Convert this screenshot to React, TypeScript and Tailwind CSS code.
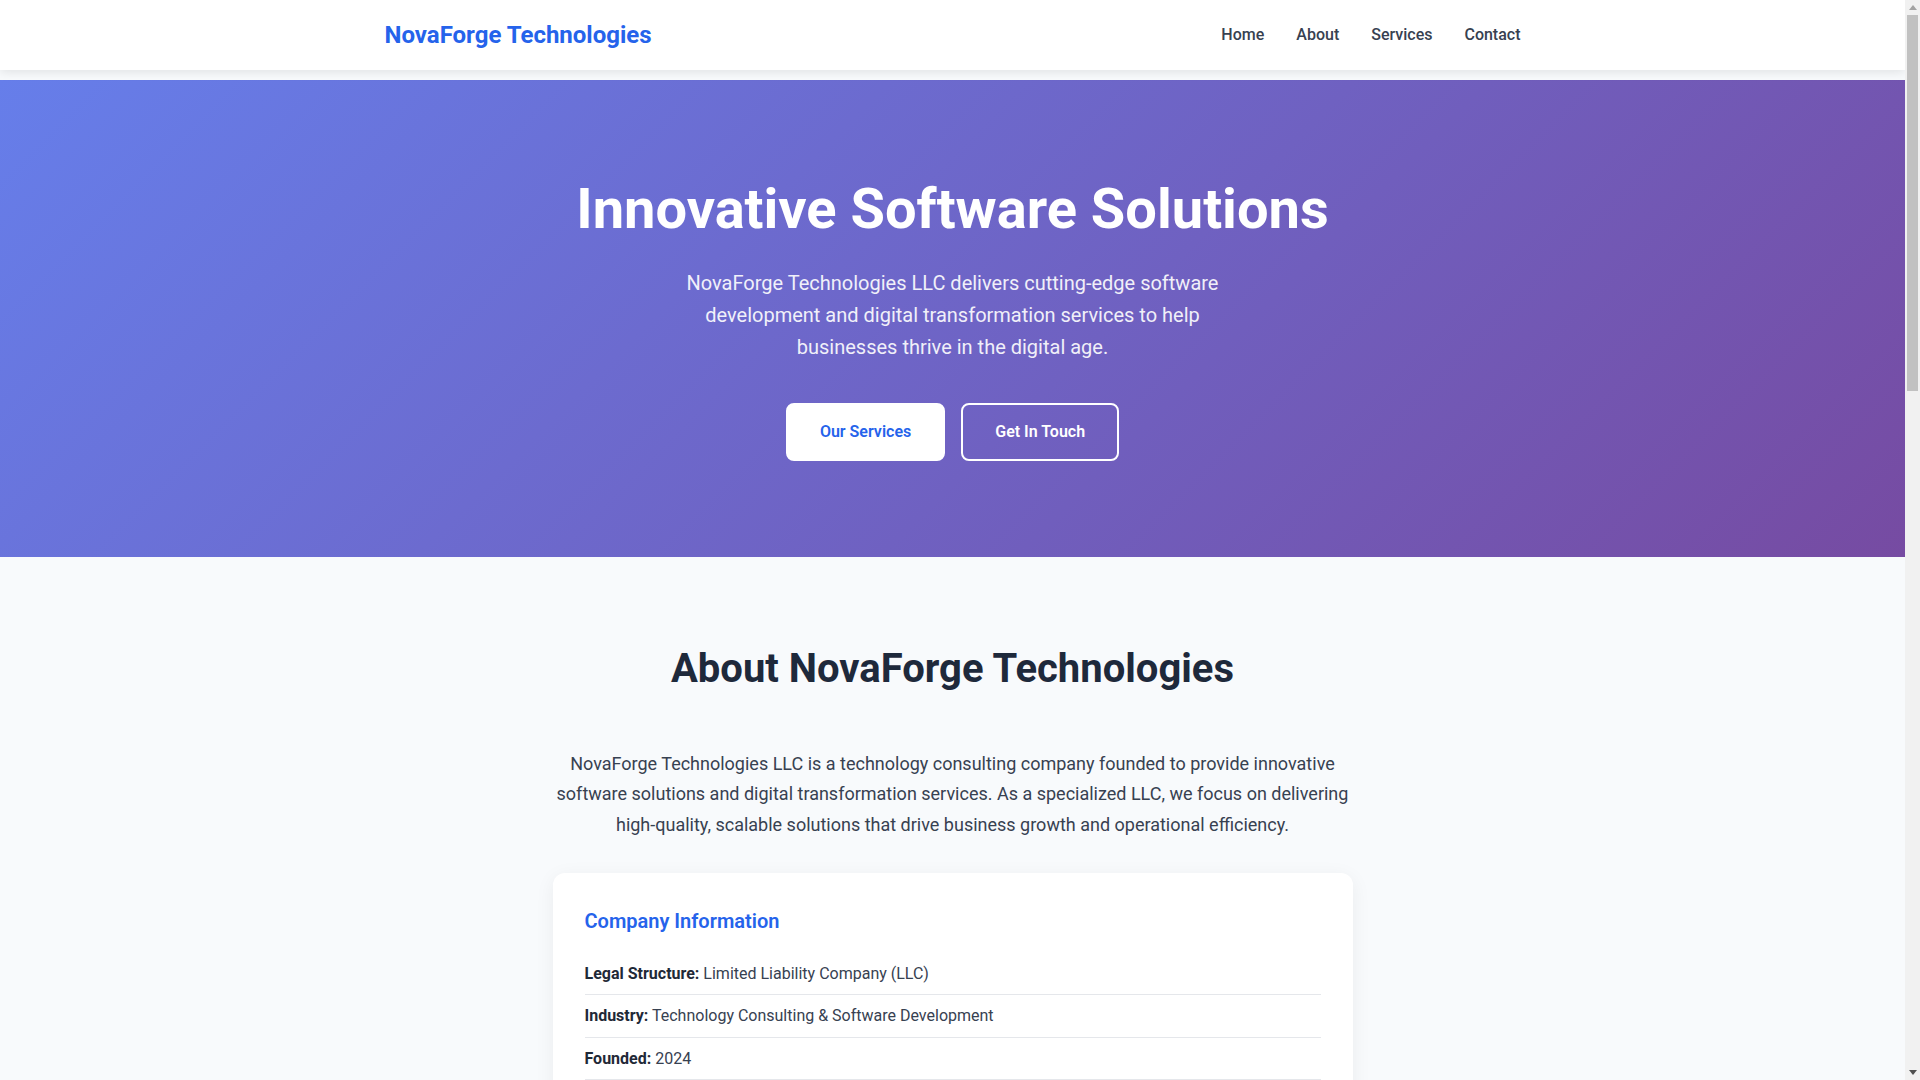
import React from "react";

const rows: [string, string][] = [
  ["Legal Structure:", "Limited Liability Company (LLC)"],
  ["Industry:", "Technology Consulting & Software Development"],
  ["Founded:", "2024"],
  ["Headquarters:", "United States"],
  ["Focus Areas:", "Custom Software, Cloud Solutions, Digital Transformation"],
];

const services = [
  {
    title: "Custom Software Development",
    text: "Tailored software solutions designed to meet your unique business requirements, built with modern technologies and best practices.",
  },
  {
    title: "Cloud Solutions",
    text: "Scalable cloud architecture, migration services and infrastructure management to keep your business agile and secure.",
  },
  {
    title: "Digital Transformation",
    text: "Strategic consulting to modernize your processes, systems and customer experiences for the digital era.",
  },
  {
    title: "Web & Mobile Applications",
    text: "Responsive web platforms and native mobile applications that deliver seamless experiences across devices.",
  },
  {
    title: "Data & Analytics",
    text: "Turn your data into actionable insights with modern analytics platforms, dashboards and reporting tools.",
  },
  {
    title: "Technology Consulting",
    text: "Expert guidance on technology strategy, architecture decisions and vendor selection for sustainable growth.",
  },
];

function Scrollbar() {
  return (
    <div className="fixed right-0 top-0 z-50 flex h-screen w-[15px] flex-col bg-[#f1f1f1]">
      <div className="flex h-[15px] items-center justify-center">
        <svg width="8" height="5" viewBox="0 0 8 5">
          <polygon points="4,0 8,5 0,5" fill="#a3a3a3" />
        </svg>
      </div>
      <div className="px-[2px]">
        <div className="h-[376px] bg-[#c1c1c1]" />
      </div>
      <div className="flex-1" />
      <div className="flex h-[15px] items-center justify-center">
        <svg width="8" height="5" viewBox="0 0 8 5">
          <polygon points="0,0 8,0 4,5" fill="#505050" />
        </svg>
      </div>
    </div>
  );
}

export default function App() {
  return (
    <div className="min-h-screen bg-[#f8fafc] font-['Roboto','Liberation_Sans',sans-serif] leading-[1.6] text-[#333333]">
      <Scrollbar />
      <div className="mr-[15px]">
        <header className="relative z-10 h-[70px] bg-white shadow-[0_2px_10px_rgba(0,0,0,0.1)]">
          <div className="mx-auto flex h-full max-w-[1200px] items-center justify-between px-8">
            <div className="text-2xl font-bold text-[#2563eb]">NovaForge Technologies</div>
            <nav className="flex items-center gap-8 text-base font-medium text-[#374151]">
              <a href="#home">Home</a>
              <a href="#about">About</a>
              <a href="#services">Services</a>
              <a href="#contact">Contact</a>
            </nav>
          </div>
        </header>

        <div className="h-[10px]" />

        <section
          id="home"
          className="bg-[linear-gradient(135deg,#667eea_0%,#764ba2_100%)] px-8 py-24 text-center text-white"
        >
          <h1 className="mb-6 text-[3.5rem] font-bold leading-[1.2]">Innovative Software Solutions</h1>
          <p className="mx-auto mb-10 max-w-[600px] text-xl leading-[1.6] opacity-90">
            NovaForge Technologies LLC delivers cutting-edge software development and digital transformation
            services to help businesses thrive in the digital age.
          </p>
          <div className="flex justify-center gap-4">
            <a
              href="#services"
              className="rounded-lg border-2 border-white bg-white px-8 py-[14px] text-base font-semibold leading-[1.6] text-[#2563eb]"
            >
              Our Services
            </a>
            <a
              href="#contact"
              className="rounded-lg border-2 border-white bg-transparent px-8 py-[14px] text-base font-semibold leading-[1.6] text-white"
            >
              Get In Touch
            </a>
          </div>
        </section>

        <section id="about" className="px-8 py-20">
          <div className="mx-auto max-w-[1200px]">
            <h2 className="mb-12 text-center text-[2.5rem] font-bold leading-[1.6] text-[#1e293b]">
              About NovaForge Technologies
            </h2>
            <p className="mx-auto mb-8 max-w-[800px] text-center text-lg leading-[1.7] text-[#374151]">
              NovaForge Technologies LLC is a technology consulting company founded to provide innovative software
              solutions and digital transformation services. As a specialized LLC, we focus on delivering
              high-quality, scalable solutions that drive business growth and operational efficiency.
            </p>
            <div className="mx-auto max-w-[800px] rounded-xl bg-white p-8 shadow-[0_4px_20px_rgba(0,0,0,0.06)]">
              <h3 className="mb-4 text-xl font-semibold leading-[1.6] text-[#2563eb]">Company Information</h3>
              <div className="flex flex-col">
                {rows.map(([label, value], i) => (
                  <div
                    key={label}
                    className={
                      i < rows.length - 1
                        ? "border-b border-[#e5e7eb] py-2 text-base leading-[1.6] text-[#374151]"
                        : "py-2 text-base leading-[1.6] text-[#374151]"
                    }
                  >
                    <strong className="font-bold text-[#1f2937]">{label}</strong> {value}
                  </div>
                ))}
              </div>
            </div>
          </div>
        </section>

        <section id="services" className="bg-white px-8 py-20">
          <div className="mx-auto max-w-[1200px]">
            <h2 className="mb-12 text-center text-[2.5rem] font-bold leading-[1.6] text-[#1e293b]">Our Services</h2>
            <div className="grid grid-cols-3 gap-8">
              {services.map((s) => (
                <div key={s.title} className="rounded-xl bg-[#f8fafc] p-8 shadow-[0_4px_20px_rgba(0,0,0,0.06)]">
                  <div className="mb-4 flex h-12 w-12 items-center justify-center rounded-lg bg-[#2563eb] text-white">
                    <svg width="24" height="24" viewBox="0 0 24 24" fill="none" stroke="currentColor" strokeWidth="2">
                      <polyline points="16 18 22 12 16 6" />
                      <polyline points="8 6 2 12 8 18" />
                    </svg>
                  </div>
                  <h3 className="mb-3 text-xl font-semibold text-[#1e293b]">{s.title}</h3>
                  <p className="text-base text-[#4b5563]">{s.text}</p>
                </div>
              ))}
            </div>
          </div>
        </section>

        <section className="px-8 py-20">
          <div className="mx-auto max-w-[1200px]">
            <h2 className="mb-12 text-center text-[2.5rem] font-bold leading-[1.6] text-[#1e293b]">Why Choose Us</h2>
            <div className="grid grid-cols-4 gap-8">
              {[
                ["Expertise", "Experienced engineers and consultants across modern technology stacks."],
                ["Quality", "Rigorous testing and code review processes for reliable results."],
                ["Scalability", "Solutions architected to grow alongside your business."],
                ["Partnership", "Transparent communication and long-term collaboration."],
              ].map(([t, d]) => (
                <div key={t} className="rounded-xl bg-white p-6 text-center shadow-[0_4px_20px_rgba(0,0,0,0.06)]">
                  <h3 className="mb-2 text-lg font-semibold text-[#2563eb]">{t}</h3>
                  <p className="text-base text-[#4b5563]">{d}</p>
                </div>
              ))}
            </div>
          </div>
        </section>

        <section id="contact" className="bg-white px-8 py-20">
          <div className="mx-auto max-w-[800px] text-center">
            <h2 className="mb-8 text-[2.5rem] font-bold leading-[1.6] text-[#1e293b]">Contact Us</h2>
            <p className="mb-8 text-lg leading-[1.7] text-[#374151]">
              Ready to transform your business? Get in touch with our team to discuss your next project.
            </p>
            <div className="rounded-xl bg-[#f8fafc] p-8 text-left shadow-[0_4px_20px_rgba(0,0,0,0.06)]">
              <div className="border-b border-[#e5e7eb] py-2">
                <strong className="text-[#1f2937]">Email:</strong> info@novaforgetech.com
              </div>
              <div className="border-b border-[#e5e7eb] py-2">
                <strong className="text-[#1f2937]">Business Hours:</strong> Monday – Friday, 9:00 AM – 6:00 PM
              </div>
              <div className="py-2">
                <strong className="text-[#1f2937]">Location:</strong> United States
              </div>
            </div>
          </div>
        </section>

        <footer className="bg-[#1e293b] px-8 py-12 text-center text-[#cbd5e1]">
          <p className="mb-2">© 2024 NovaForge Technologies LLC. All rights reserved.</p>
          <p className="text-sm text-[#94a3b8]">Innovative Software Solutions for the Digital Age</p>
        </footer>
      </div>
    </div>
  );
}
